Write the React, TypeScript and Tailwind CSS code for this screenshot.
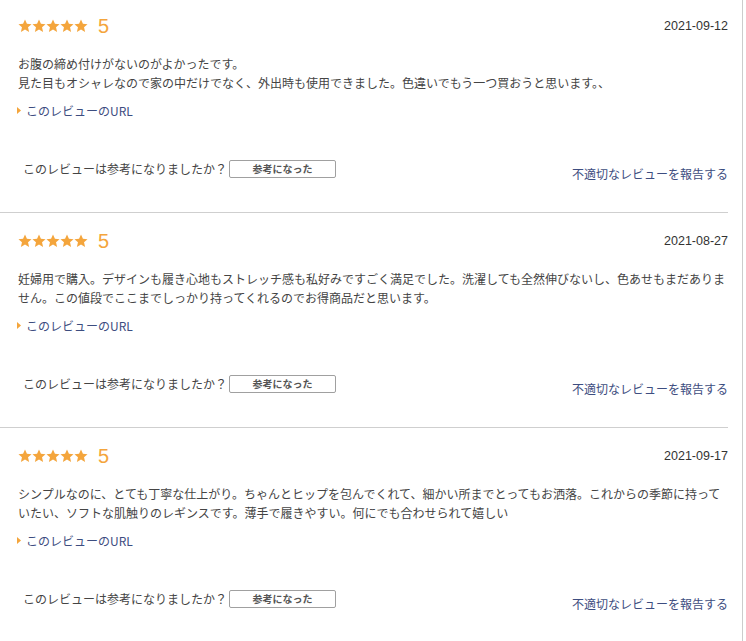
import React from 'react';

interface Review {
  id: number;
  rating: number;
  date: string;
  body: string[];
}

const reviews: Review[] = [
  {
    id: 1,
    rating: 5,
    date: '2021-09-12',
    body: [
      'お腹の締め付けがないのがよかったです。',
      '見た目もオシャレなので家の中だけでなく、外出時も使用できました。色違いでもう一つ買おうと思います。、',
    ],
  },
  {
    id: 2,
    rating: 5,
    date: '2021-08-27',
    body: [
      '妊婦用で購入。デザインも履き心地もストレッチ感も私好みですごく満足でした。洗濯しても全然伸びないし、色あせもまだありません。この値段でここまでしっかり持ってくれるのでお得商品だと思います。',
    ],
  },
  {
    id: 3,
    rating: 5,
    date: '2021-09-17',
    body: [
      'シンプルなのに、とても丁寧な仕上がり。ちゃんとヒップを包んでくれて、細かい所までとってもお洒落。これからの季節に持っていたい、ソフトな肌触りのレギンスです。薄手で履きやすい。何にでも合わせられて嬉しい',
    ],
  },
];

function Star() {
  return (
    <svg width="14" height="14" viewBox="0 0 24 24" className="block">
      <path
        d="M12 1l3.3 7.2 7.9.8-6 5.3 1.8 7.8L12 18.1l-7 4 1.8-7.8-6-5.3 7.9-.8z"
        fill="#f4a53c"
      />
    </svg>
  );
}

function ReviewItem({ review, first }: { review: Review; first: boolean }) {
  return (
    <div
      className={`mr-[14px] border-b border-[#cfcfcf] pl-[18px] pb-[29px] ${first ? 'pt-[16px]' : 'pt-[18px]'}`}
    >
      <div className="flex h-[20px] items-center justify-between">
        <div className="flex items-center">
          {Array.from({ length: review.rating }).map((_, i) => (
            <Star key={i} />
          ))}
          <span className="ml-[10px] font-['Liberation_Sans',sans-serif] text-[20px] leading-[20px] text-[#f4a53c]">
            {review.rating}
          </span>
        </div>
        <span className="font-['Liberation_Sans',sans-serif] text-[12.5px] text-[#333]">{review.date}</span>
      </div>

      <p className="mt-[18px] text-[12px] leading-[19px] text-[#444]">
        {review.body.map((line, i) => (
          <React.Fragment key={i}>
            {i > 0 && <br />}
            {line}
          </React.Fragment>
        ))}
      </p>

      <div className="mt-[9px] flex h-[19px] items-center">
        <svg width="4" height="7" viewBox="0 0 4 7" className="-ml-[1px] mr-[5px]">
          <path d="M0 0L4 3.5L0 7z" fill="#f4a53c" />
        </svg>
        <a href="#" className="text-[12px] leading-[19px] text-[#3d4d80]">
          このレビューのURL
        </a>
      </div>

      <div className="mt-[40px] flex items-start justify-between">
        <div className="flex h-[18px] items-center pl-[5px]">
          <span className="text-[12px] text-[#444]">このレビューは参考になりましたか？</span>
          <button className="ml-[2px] h-[18px] w-[107px] rounded-[2px] border border-[#a0a0a0] bg-white text-[10px] font-bold leading-[16px] text-[#555]">
            参考になった
          </button>
        </div>
        <a href="#" className="mt-[4px] text-[12px] leading-[19px] text-[#3d4d80]">
          不適切なレビューを報告する
        </a>
      </div>
    </div>
  );
}

export default function App() {
  return (
    <div className="h-[641px] w-[743px] overflow-hidden border-r border-[#cccccc] bg-white font-['Noto_Sans_CJK_JP',sans-serif]">
      {reviews.map((r, i) => (
        <ReviewItem key={r.id} review={r} first={i === 0} />
      ))}
    </div>
  );
}
